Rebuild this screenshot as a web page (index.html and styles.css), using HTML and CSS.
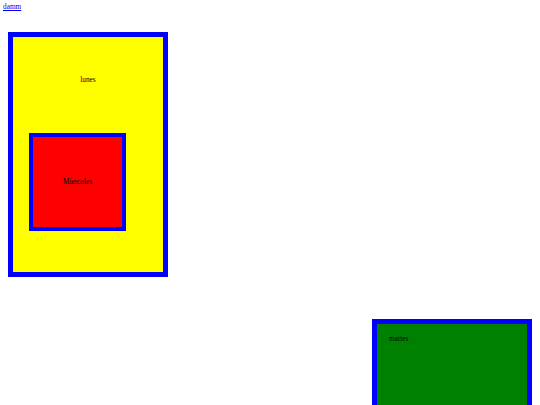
FILE: index.html
```html
<!DOCTYPE html>
<html>
<head>
<meta charset="utf-8">
<link rel="stylesheet" href="styles.css">
</head>
<body>
<div class="page">
  <a class="nav-link" href="#">damm</a>
  <div class="box box-yellow">
    <div class="label label-center">lunes</div>
    <div class="box box-red">
      <div class="label">Miercoles</div>
    </div>
  </div>
  <div class="box box-green">
    <div class="label">martes</div>
  </div>
</div>
</body>
</html>
```
FILE: styles.css
```css
html, body {
  margin: 0;
  padding: 0;
  background: #ffffff;
  overflow: hidden;
}
.page {
  width: 540px;
  height: 405px;
  overflow: hidden;
  font-family: "Liberation Serif", "Times New Roman", serif;
  font-size: 7.3px;
  line-height: 8px;
  color: #000;
  padding-top: 3px;
  box-sizing: border-box;
}
.nav-link {
  display: inline-block;
  margin-left: 3px;
  color: #0000ee;
  text-decoration: underline;
}
.box {
  box-sizing: border-box;
  border-style: solid;
  border-color: #0000ff;
}
.box-yellow {
  background: #ffff00;
  border-width: 5px;
  width: 160px;
  height: 245px;
  margin: 21px 0 0 8px;
  padding: 39px 0 0 16px;
}
.label-center {
  text-align: center;
  margin-left: -16px;
}
.box-red {
  background: #ff0000;
  border-width: 4px;
  width: 97px;
  height: 98px;
  margin-top: 49px;
  display: flex;
  align-items: center;
  justify-content: center;
}
.box-green {
  background: #008000;
  border-width: 5px;
  width: 160px;
  height: 160px;
  margin: 42px 0 0 372px;
  padding: 11px 12px;
}
```
